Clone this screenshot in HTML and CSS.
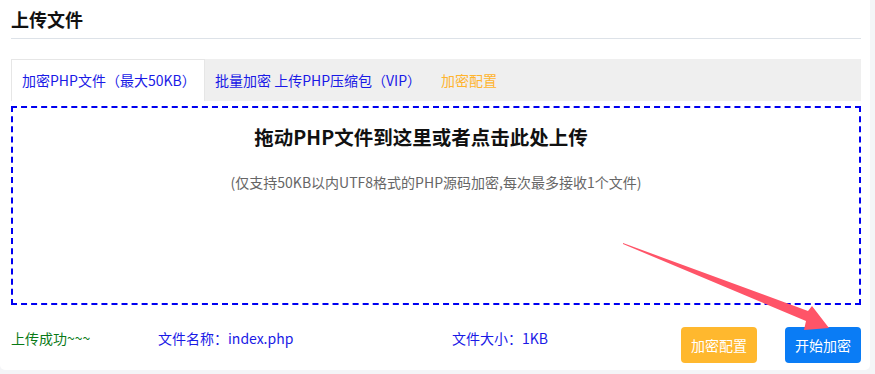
FILE: index.html
```html
<!DOCTYPE html>
<html lang="zh-CN">
<head>
<meta charset="utf-8">
<title>上传文件</title>
<link rel="stylesheet" href="styles.css">
</head>
<body>
<div class="card">
  <div class="header">上传文件</div>
  <div class="tabs">
    <div class="tab active">加密PHP文件（最大50KB）</div>
    <div class="tab">批量加密 上传PHP压缩包（VIP）</div>
    <div class="tab orange">加密配置</div>
  </div>
  <div class="drop">
    <div class="drop-title">拖动PHP文件到这里或者点击此处上传</div>
    <div class="drop-sub">(仅支持50KB以内UTF8格式的PHP源码加密,每次最多接收1个文件)</div>
  </div>
  <div class="footer">
    <div class="status">上传成功~~~</div>
    <div class="fname">文件名称：index.php</div>
    <div class="fsize">文件大小：1KB</div>
    <div class="btns">
      <button class="btn yellow">加密配置</button>
      <button class="btn blue">开始加密</button>
    </div>
  </div>
  <svg class="arrow" width="875" height="374" viewBox="0 0 875 374">
    <polygon points="623,243 808,311 812,306 829,328 804,330 806,321 623,244" fill="#ff5468"/>
  </svg>
</div>
</body>
</html>
```
FILE: styles.css
```css
* { box-sizing: border-box; }
html, body { margin: 0; padding: 0; }
body {
  background: #f4f5f7;
  font-family: "Noto Sans CJK SC", "Noto Sans", sans-serif;
  width: 875px;
  height: 374px;
  overflow: hidden;
}
.card {
  position: relative;
  width: 870px;
  height: 370px;
  background: #fff;
  border-radius: 0 0 5px 5px;
  padding: 0 9px 0 11px;
}
.header {
  font-size: 18px;
  font-weight: bold;
  color: #111;
  height: 39px;
  line-height: 24px;
  padding-top: 7px;
  border-bottom: 1px solid #dde2e8;
}
.tabs {
  margin-top: 20px;
  height: 42px;
  background: #efefef;
  display: flex;
  align-items: stretch;
}
.tab {
  font-size: 14px;
  line-height: 42px;
  color: #1a1ae6;
  padding: 0 10px;
  margin-right: 0;
  white-space: nowrap;
}
.tab.active {
  background: #fff;
  border: 1px solid #e6e6e6;
  border-bottom: none;
  line-height: 41px;
  width: 194px;
  padding: 0 0 0 10px;
}
.tab.orange { color: #ffb42e; }
.drop {
  margin-top: 5px;
  height: 199px;
  border: 2px dashed #0000f0;
  text-align: center;
}
.drop-title {
  margin-top: 16px;
  padding-right: 30px;
  font-size: 19.5px;
  font-weight: bold;
  color: #111;
  line-height: 26px;
}
.drop-sub {
  margin-top: 21px;
  font-size: 14px;
  color: #666;
  line-height: 22px;
}
.footer {
  margin-top: 22px;
  height: 36px;
  display: flex;
  align-items: flex-start;
  font-size: 14px;
  line-height: 22px;
}
.status { width: 147px; color: #0a7a16; }
.fname { width: 294px; color: #1a1ae6; }
.fsize { color: #1a1ae6; }
.btns { margin-left: auto; display: flex; gap: 28px; }
.btn {
  width: 76px;
  height: 36px;
  border: none;
  border-radius: 4px;
  color: #fff;
  font-size: 14px;
  font-family: inherit;
  padding: 0;
}
.btn.yellow { background: #ffb82e; }
.btn.blue { background: #0a7cf5; }
.arrow {
  position: absolute;
  left: 0;
  top: 0;
  pointer-events: none;
}
```
